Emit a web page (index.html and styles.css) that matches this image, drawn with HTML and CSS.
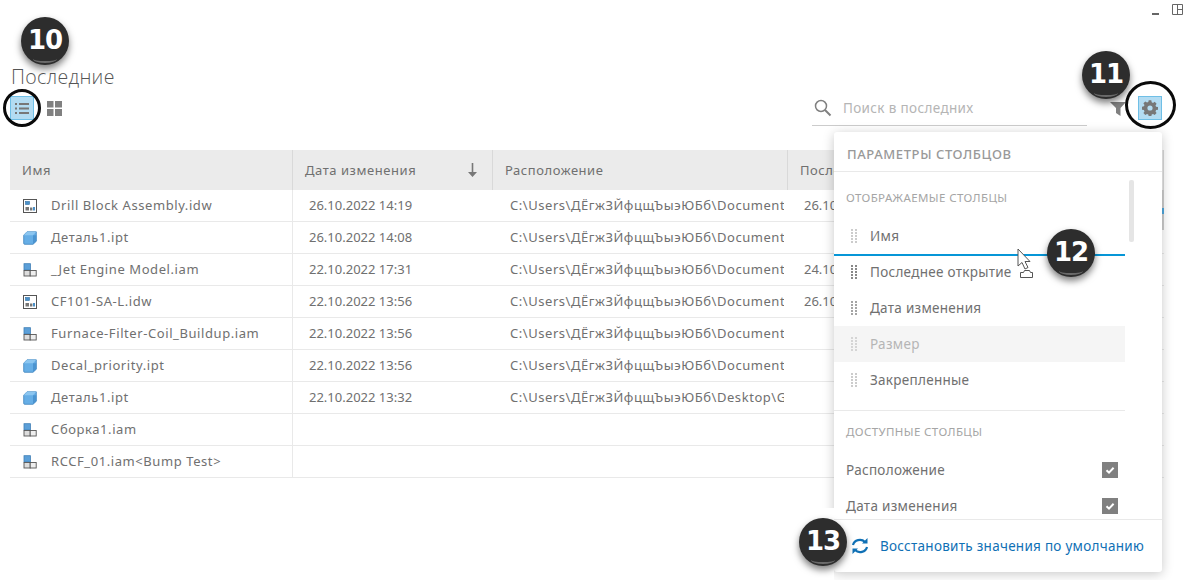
FILE: index.html
```html
<!DOCTYPE html>
<html lang="ru">
<head>
<meta charset="utf-8">
<title>Последние</title>
<link rel="stylesheet" href="styles.css">
</head>
<body>
<svg class="defs" width="0" height="0" aria-hidden="true">
  <defs>
    <symbol id="ic-idw" viewBox="0 0 14 14">
      <rect x=".5" y=".5" width="13" height="13" fill="#fff" stroke="#555"/>
      <rect x="2.500" y="2.500" width="4" height="3" fill="#4a90c8" stroke="#2d6ea5" stroke-width=".6"/>
      <rect x="2.500" y="8" width="3.500" height="3.500" fill="#777"/>
      <rect x="7" y="8.500" width="2.400" height="3" fill="#777"/>
      <rect x="10" y="8" width="2" height="3.500" fill="#4a90c8"/>
    </symbol>
    <symbol id="ic-ipt" viewBox="0 0 14 14">
      <path d="M.7 4.200 4 .8h9.300v9.400L10 13.300H1.700q-1 0-1-1z" fill="#66aee6" stroke="#3f83bd" stroke-width=".8"/>
      <path d="M4 .8h9.300L10 4.200H.7z" fill="#8cc6f0"/>
      <path d="M10 4.200h3.300v6L10 13.300z" fill="#4b94d0"/>
    </symbol>
    <symbol id="ic-iam" viewBox="0 0 14 14">
      <rect x="1" y=".7" width="6.400" height="6.300" fill="#5b9fd8" stroke="#3f7fb6" stroke-width=".8"/>
      <rect x="1" y="7.500" width="6.200" height="5.500" fill="#ddd" stroke="#555" stroke-width=".9"/>
      <rect x="7.200" y="7.500" width="6" height="5.500" fill="#eee" stroke="#555" stroke-width=".9"/>
    </symbol>
    <symbol id="ic-grip" viewBox="0 0 6 14">
      <g fill="currentColor"><rect x="0" y="0" width="2" height="2"/><rect x="4" y="0" width="2" height="2"/><rect x="0" y="3" width="2" height="2"/><rect x="4" y="3" width="2" height="2"/><rect x="0" y="6" width="2" height="2"/><rect x="4" y="6" width="2" height="2"/><rect x="0" y="9" width="2" height="2"/><rect x="4" y="9" width="2" height="2"/><rect x="0" y="12" width="2" height="2"/><rect x="4" y="12" width="2" height="2"/></g>
    </symbol>
    <symbol id="ic-check" viewBox="0 0 16 16">
      <rect width="16" height="16" fill="#808080"/>
      <path d="M4.500 8.200 7 10.600l4.600-4.800" fill="none" stroke="#fff" stroke-width="2"/>
    </symbol>
  </defs>
</svg>

<main class="page">
  <div class="window-controls">
    <span class="minimize"></span>
    <svg class="dock" width="11" height="11" viewBox="0 0 11 11"><path d="M.5.5h10v10H.5zM5.500.5v10M5.500 5.500h5" fill="none" stroke="#666"/></svg>
  </div>

  <h1 class="title">Последние</h1>

  <div class="toolbar">
    <div class="view-switch">
      <button class="tool tool-on" aria-label="Список">
        <svg width="14" height="13" viewBox="0 0 14 13"><path d="M0 1h2v2H0zM4 1h10v2H4zM0 5.500h2v2H0zM4 5.500h10v2H4zM0 10h2v2H0zM4 10h10v2H4z" fill="#777"/></svg>
      </button>
      <button class="tool" aria-label="Плитки">
        <svg width="15" height="15" viewBox="0 0 15 15"><path d="M0 0h6.500v6.500H0zM8 0h7v6.500H8zM0 8h6.500v7H0zM8 8h7v7H8z" fill="#808080"/></svg>
      </button>
    </div>
    <div class="toolbar-right">
      <div class="search">
        <svg width="18" height="18" viewBox="0 0 18 18"><circle cx="7" cy="7" r="5.500" fill="none" stroke="#808080" stroke-width="1.500"/><path d="m11 11 5.500 5.500" stroke="#808080" stroke-width="2"/></svg>
        <span class="search-text">Поиск в последних</span>
      </div>
      <svg class="filter" width="16" height="14" viewBox="0 0 16 14"><path d="M0 0h16l-5.500 6V14L6 11V6z" fill="#808080"/></svg>
      <button class="tool tool-on gear-btn" aria-label="Параметры">
        <svg width="16" height="16" viewBox="0 0 16 16"><path d="M6.700.3h2.600l.4 2 1.300.6 1.700-1.100 1.900 1.900-1.100 1.700.6 1.300 2 .4v2.600l-2 .4-.6 1.300 1.100 1.700-1.900 1.900-1.700-1.100-1.300.6-.4 2H6.700l-.4-2-1.300-.6-1.700 1.100-1.900-1.900 1.100-1.700-.6-1.300-2-.4V6.700l2-.4.600-1.300-1.100-1.700 1.900-1.900L5 2.500l1.300-.6zM8 5.400a2.600 2.600 0 1 0 0 5.200 2.600 2.600 0 0 0 0-5.200z" fill="#777" fill-rule="evenodd"/></svg>
      </button>
    </div>
  </div>

  <div class="table">
    <div class="row head">
      <div class="c c-name">Имя</div>
      <div class="c c-date">Дата изменения<svg class="sort" width="9" height="14" viewBox="0 0 9 14"><path d="M3.700 0h1.600v9H9l-4.500 5L0 9h3.700z" fill="#777"/></svg></div>
      <div class="c c-loc">Расположение</div>
      <div class="c c-last">Последнее открытие</div>
    </div>
    <div class="row"><div class="c c-name"><svg class="fi"><use href="#ic-idw"/></svg>Drill Block Assembly.idw</div><div class="c c-date">26.10.2022 14:19</div><div class="c c-loc"><span class="clip">C:\Users\ДЁгжЗЙфцщЪыэЮБб\Documents\Inventor</span></div><div class="c c-last">26.10.2022</div></div>
    <div class="row"><div class="c c-name"><svg class="fi"><use href="#ic-ipt"/></svg>Деталь1.ipt</div><div class="c c-date">26.10.2022 14:08</div><div class="c c-loc"><span class="clip">C:\Users\ДЁгжЗЙфцщЪыэЮБб\Documents\Inventor</span></div><div class="c c-last"></div></div>
    <div class="row"><div class="c c-name"><svg class="fi"><use href="#ic-iam"/></svg>_Jet Engine Model.iam</div><div class="c c-date">22.10.2022 17:31</div><div class="c c-loc"><span class="clip">C:\Users\ДЁгжЗЙфцщЪыэЮБб\Documents\Inventor</span></div><div class="c c-last">24.10.2022</div></div>
    <div class="row"><div class="c c-name"><svg class="fi"><use href="#ic-idw"/></svg>CF101-SA-L.idw</div><div class="c c-date">22.10.2022 13:56</div><div class="c c-loc"><span class="clip">C:\Users\ДЁгжЗЙфцщЪыэЮБб\Documents\Inventor</span></div><div class="c c-last">26.10.2022</div></div>
    <div class="row"><div class="c c-name"><svg class="fi"><use href="#ic-iam"/></svg>Furnace-Filter-Coil_Buildup.iam</div><div class="c c-date">22.10.2022 13:56</div><div class="c c-loc"><span class="clip">C:\Users\ДЁгжЗЙфцщЪыэЮБб\Documents\Inventor</span></div><div class="c c-last"></div></div>
    <div class="row"><div class="c c-name"><svg class="fi"><use href="#ic-ipt"/></svg>Decal_priority.ipt</div><div class="c c-date">22.10.2022 13:56</div><div class="c c-loc"><span class="clip">C:\Users\ДЁгжЗЙфцщЪыэЮБб\Documents\Inventor</span></div><div class="c c-last"></div></div>
    <div class="row"><div class="c c-name"><svg class="fi"><use href="#ic-ipt"/></svg>Деталь1.ipt</div><div class="c c-date">22.10.2022 13:32</div><div class="c c-loc"><span class="clip">C:\Users\ДЁгжЗЙфцщЪыэЮБб\Desktop\Gear</span></div><div class="c c-last"></div></div>
    <div class="row"><div class="c c-name"><svg class="fi"><use href="#ic-iam"/></svg>Сборка1.iam</div><div class="c c-date"></div><div class="c c-loc"></div><div class="c c-last"></div></div>
    <div class="row"><div class="c c-name"><svg class="fi"><use href="#ic-iam"/></svg>RCCF_01.iam&lt;Bump Test&gt;</div><div class="c c-date"></div><div class="c c-loc"></div><div class="c c-last"></div></div>
  </div>

  <span class="table-scroll"><span class="table-scroll-dot"></span></span>

  <aside class="panel">
    <div class="panel-title">ПАРАМЕТРЫ СТОЛБЦОВ</div>
    <div class="panel-body">
      <div class="section-label">ОТОБРАЖАЕМЫЕ СТОЛБЦЫ</div>
      <div class="drag-item light"><svg class="grip"><use href="#ic-grip"/></svg>Имя</div>
      <div class="drop-line"></div>
      <div class="drag-item"><svg class="grip"><use href="#ic-grip"/></svg>Последнее открытие</div>
      <div class="drag-item mid"><svg class="grip"><use href="#ic-grip"/></svg>Дата изменения</div>
      <div class="drag-item ghost"><svg class="grip"><use href="#ic-grip"/></svg>Размер</div>
      <div class="drag-item light"><svg class="grip"><use href="#ic-grip"/></svg>Закрепленные</div>
      <div class="divider"></div>
      <div class="section-label second">ДОСТУПНЫЕ СТОЛБЦЫ</div>
      <div class="check-item">Расположение<svg class="check"><use href="#ic-check"/></svg></div>
      <div class="check-item">Дата изменения<svg class="check"><use href="#ic-check"/></svg></div>
      <div class="scrollbar"></div>
    </div>
    <div class="panel-foot">
      <svg width="18" height="16" viewBox="0 0 18 16"><path d="M2 7a7 6.500 0 0 1 12-3M16 9a7 6.500 0 0 1-12 3" fill="none" stroke="#0f70b5" stroke-width="2.200"/><path d="M11 5.500h5.500V0zM7 10.500H1.500V16z" fill="#0f70b5"/></svg>
      <span class="restore">Восстановить значения по умолчанию</span>
    </div>
  </aside>

  <span class="badge-patch"></span>
  <span class="marker-ring ring-list"></span>
  <span class="marker-ring ring-gear"></span>
  <span class="badge b10">10</span>
  <span class="badge b11">11</span>
  <span class="badge b12">12</span>
  <span class="badge b13">13</span>
  <svg class="cursor" width="19" height="30" viewBox="0 0 19 30"><path d="M1 1v17l4-3.500 3 6.500 3-1.500-3-6h5z" fill="#fff" stroke="#555"/><path d="M3.500 24.500h3l1-2h5l1 2h2v5h-12z" fill="#fff" stroke="#555"/></svg>
</main>
</body>
</html>
```

FILE: styles.css
```css
* { box-sizing: border-box; }
html, body { margin: 0; height: 100%; background: #fff; overflow: hidden; }
body { font-family: "Noto Sans", "Open Sans", sans-serif; color: #707070; }
.defs { position: absolute; }
.page { position: relative; width: 1188px; height: 580px; padding: 0 10px; overflow: hidden; }
.window-controls { height: 67px; display: flex; justify-content: flex-end; gap: 13px; padding: 4px 1px 0 0; margin-right: -6px; }
.minimize { width: 7px; height: 2px; background: #666; margin-top: 9px; }
.dock { display: block; }
.title { margin: 0 0 0 1px; height: 20px; font-size: 19.500px; line-height: 20px; font-weight: 300; font-family: "Open Sans", sans-serif; color: #555; letter-spacing: .3px; }
.toolbar { height: 63px; display: flex; justify-content: space-between; align-items: flex-start; }
.view-switch { display: flex; gap: 8px; padding: 9px 0 0 0; }
.tool { width: 24px; height: 24px; border: 0; background: none; padding: 0; display: flex; align-items: center; justify-content: center; }
.tool-on { background: #b3dcf2; border: 1px solid #6fbfe6; }
.toolbar-right { display: flex; align-items: flex-start; padding-top: 7px; margin-right: 16px; }
.search { width: 275px; height: 32px; border-bottom: 1px solid #ccc; display: flex; align-items: center; gap: 11px; padding: 0 0 4px 2px; margin-right: 23px; }
.search-text { font-size: 13.500px; color: #b5b5b5; letter-spacing: .35px; }
.filter { margin: 8px 12px 0 0; }
.gear-btn { margin-top: 2px; }
.table { width: 1154px; }
.row { display: flex; height: 32px; border-bottom: 1px solid #e9e9e9; font-size: 13px; }
.head { height: 40px; background: #ebebeb; border-bottom: 0; letter-spacing: .55px; }
.c { display: flex; align-items: center; white-space: nowrap; overflow: hidden; padding-bottom: 2px; }
.head .c { border-right: 1px solid #d9d9d9; padding-bottom: 1px; }
.c-name { width: 283px; padding-left: 13px; border-right: 1px solid #e9e9e9; letter-spacing: .58px; }
.c-date { width: 200px; padding-left: 16px; position: relative; }
.c-loc { width: 295px; padding-left: 17px; letter-spacing: .55px; }
.c-last { flex: 1; padding-left: 16px; }
.head .c-name { padding-left: 12px; }
.head .c-date, .head .c-loc, .head .c-last { padding-left: 12px; letter-spacing: .55px; }
.clip { display: block; width: 274px; overflow: hidden; }
.sort { position: absolute; right: 15px; top: 13px; }
.fi { width: 14px; height: 14px; margin: 2px 14px 0 0; flex: none; }
.table-scroll { position: absolute; left: 1162px; top: 190px; width: 2px; height: 40px; background: #ccc; }
.table-scroll-dot { display: block; width: 2px; height: 6px; margin-top: 18px; background: #4ea6dc; }
.panel { position: absolute; left: 834px; top: 132px; width: 328px; height: 440px; background: #fff; border-radius: 3px; box-shadow: 0 2px 12px rgba(0,0,0,.22); display: flex; flex-direction: column; }
.panel-title { height: 40px; padding: 13px 13px 0; font-size: 13px; font-weight: 500; color: #999; letter-spacing: .6px; border-bottom: 1px solid #e9e9e9; flex: none; }
.panel-body { position: relative; flex: 1; overflow: hidden; }
.section-label { font-size: 11.500px; color: #a5a5a5; letter-spacing: .4px; padding: 18px 0 0 12px; height: 46px; }
.section-label.second { padding-top: 13px; height: 41px; }
.drag-item { width: 291px; height: 36px; display: flex; align-items: center; font-size: 13.500px; padding-left: 17px; letter-spacing: .28px; }
.drag-item .grip { width: 6px; height: 14px; margin-right: 13px; color: #888; flex: none; }
.drag-item.mid .grip { color: #a5a5a5; }
.drag-item.light .grip { color: #ccc; }
.drag-item.ghost { background: #f5f5f5; color: #b5b5b5; }
.drag-item.ghost .grip { color: #d5d5d5; }
.drop-line { width: 291px; height: 2px; background: #0696d7; margin: 0 0 -2px; position: relative; }
.divider { width: 291px; height: 1px; background: #e9e9e9; margin-top: 12px; }
.check-item { width: 284px; height: 36px; display: flex; align-items: center; justify-content: space-between; font-size: 13.500px; padding-left: 12px; letter-spacing: .3px; }
.check { width: 16px; height: 16px; }
.scrollbar { position: absolute; left: 295px; top: 8px; width: 5px; height: 62px; background: #e5e5e5; border-radius: 2px; }
.panel-foot { height: 53px; flex: none; border-top: 1px solid #e9e9e9; display: flex; align-items: center; gap: 11px; padding: 0 0 0 17px; }
.restore { font-size: 13.500px; color: #0f70b5; letter-spacing: .27px; }
.badge-patch { position: absolute; left: 790px; top: 508px; width: 44px; height: 72px; background: #fff; }
.marker-ring { position: absolute; border: 3px solid #0a0a0a; border-radius: 50%; width: 38px; height: 38px; }
.ring-list { left: 3px; top: 89px; }
.ring-gear { left: 1125px; top: 81px; width: 51px; height: 48px; }
.badge { position: absolute; width: 48px; height: 48px; border-radius: 50%; background: #2d2d2d; box-shadow: 0 4px 7px rgba(0,0,0,.5); color: #fff; font: 700 26px/47px "DejaVu Sans", sans-serif; text-align: center; letter-spacing: -1px; }
.badge::after { content: ""; position: absolute; left: 12px; bottom: 2px; width: 24px; height: 6px; border-bottom: 2px solid #6a6a6a; border-radius: 50%; }
.b10 { left: 21px; top: 17px; }
.b11 { left: 1082px; top: 51px; }
.b12 { left: 1047px; top: 229px; }
.b13 { left: 799px; top: 518px; }
.cursor { position: absolute; left: 1017px; top: 248px; }
```
